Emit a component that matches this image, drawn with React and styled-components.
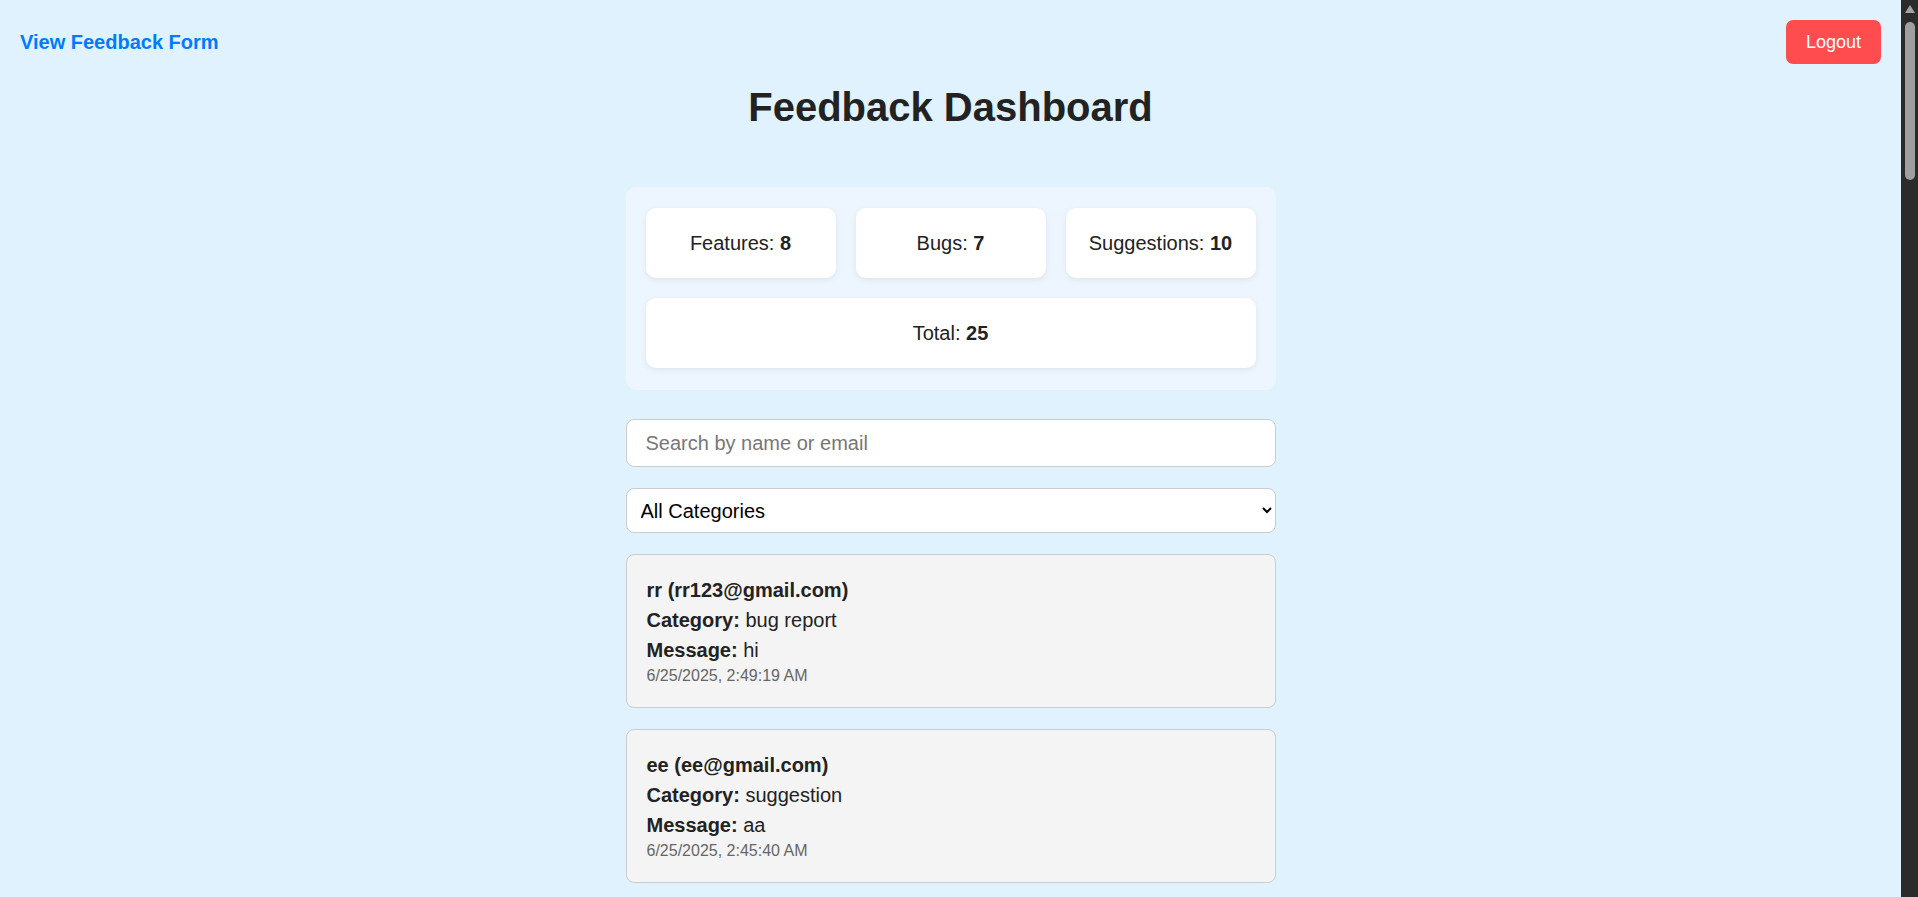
import { useState } from "react"
import styled, { createGlobalStyle } from "styled-components"

const GlobalStyle = createGlobalStyle`
  html, body {
    margin: 0;
    padding: 0;
  }
  body {
    background-color: #e0f2fe;
    font-family: "Liberation Sans", Arial, sans-serif;
    color: #222;
  }
`

// the window's own scrollbar, drawn since the shot has none
const ScrollTrack = styled.div`
  position: fixed;
  top: 0;
  right: 0;
  bottom: 0;
  width: 17px;
  background: #2b2b2b;
  z-index: 10;
`

const ScrollArrow = styled.div`
  position: absolute;
  top: 5px;
  left: 4px;
  width: 0;
  height: 0;
  border-left: 5px solid transparent;
  border-right: 5px solid transparent;
  border-bottom: 8px solid #a3a3a3;
`

const ScrollThumb = styled.div`
  position: absolute;
  top: 22px;
  left: 4px;
  width: 10px;
  height: 158px;
  border-radius: 5px;
  background: #9f9f9f;
`

const Shell = styled.div`
  margin-right: 17px;
`

const Header = styled.header`
  display: flex;
  justify-content: space-between;
  align-items: center;
  padding: 20px;
`

const FormLink = styled.a`
  color: #007bff;
  font-size: 20px;
  font-weight: bold;
  text-decoration: none;
  cursor: pointer;
`

const LogoutButton = styled.button`
  background-color: #ff4d4f;
  color: #fff;
  border: none;
  border-radius: 7px;
  height: 44px;
  width: 95px;
  padding: 0;
  font-family: inherit;
  font-size: 18px;
  cursor: pointer;
`

const Title = styled.h1`
  text-align: center;
  font-size: 40px;
  line-height: 46px;
  margin: 0 0 57px;
  color: #222;
`

const Main = styled.main`
  max-width: 650px;
  margin: 0 auto;
  padding-bottom: 40px;
`

const StatsPanel = styled.section`
  background-color: #edf6ff;
  border-radius: 10px;
  padding: 21px 20px 22px;
  margin-bottom: 29px;
  display: grid;
  grid-template-columns: repeat(3, 1fr);
  gap: 20px;
`

const StatCard = styled.div`
  background: #fff;
  border-radius: 10px;
  box-shadow: 0 2px 6px rgba(0, 0, 0, 0.07);
  height: 70px;
  display: flex;
  align-items: center;
  justify-content: center;
  font-size: 20px;
  grid-column: ${({ $wide }) => ($wide ? "1 / -1" : "auto")};
  & b {
    font-weight: bold;
  }
`

const SearchInput = styled.input`
  display: block;
  width: 100%;
  box-sizing: border-box;
  height: 48px;
  padding: 0 19px;
  font-family: inherit;
  font-size: 20px;
  border: 1px solid #ccc;
  border-radius: 8px;
  background: #fff;
  margin-bottom: 21px;
  outline: none;
  &::placeholder {
    color: #777;
  }
`

const CategorySelect = styled.select`
  display: block;
  width: 100%;
  box-sizing: border-box;
  height: 45px;
  padding: 0 10px;
  font-family: inherit;
  font-size: 20px;
  color: #000;
  border: 1px solid #ccc;
  border-radius: 8px;
  background: #fff;
  margin-bottom: 21px;
`

const FeedbackList = styled.div`
  display: flex;
  flex-direction: column;
  gap: 21px;
`

const FeedbackCard = styled.div`
  background: #f4f4f4;
  border: 1px solid #ccc;
  border-radius: 8px;
  padding: 20px;
`

const CardLine = styled.p`
  margin: 0;
  font-size: 20px;
  line-height: 30px;
  color: #222;
  font-weight: ${({ $bold }) => ($bold ? "bold" : "normal")};
`

const DateLine = styled.p`
  margin: 0;
  font-size: 16px;
  line-height: 22px;
  color: #666;
`

const feedbacks = [
  { name: "rr", email: "rr123@gmail.com", category: "bug report", message: "hi", date: "6/25/2025, 2:49:19 AM" },
  { name: "ee", email: "ee@gmail.com", category: "suggestion", message: "aa", date: "6/25/2025, 2:45:40 AM" },
  { name: "ww", email: "ww@gmail.com", category: "feature request", message: "add dark mode", date: "6/25/2025, 2:40:12 AM" },
  { name: "qq", email: "qq@gmail.com", category: "suggestion", message: "nice", date: "6/25/2025, 2:31:05 AM" },
  { name: "tt", email: "tt@gmail.com", category: "bug report", message: "page crashes", date: "6/25/2025, 2:22:48 AM" },
  { name: "yy", email: "yy@gmail.com", category: "feature request", message: "export csv", date: "6/25/2025, 2:10:33 AM" },
  { name: "uu", email: "uu@gmail.com", category: "suggestion", message: "ok", date: "6/25/2025, 1:58:21 AM" },
  { name: "ii", email: "ii@gmail.com", category: "bug report", message: "login fails", date: "6/25/2025, 1:47:09 AM" },
  { name: "oo", email: "oo@gmail.com", category: "suggestion", message: "good", date: "6/25/2025, 1:36:54 AM" },
  { name: "pp", email: "pp@gmail.com", category: "feature request", message: "notifications", date: "6/25/2025, 1:25:40 AM" },
  { name: "aa", email: "aa@gmail.com", category: "suggestion", message: "test", date: "6/25/2025, 1:14:27 AM" },
  { name: "ss", email: "ss@gmail.com", category: "bug report", message: "slow load", date: "6/25/2025, 1:03:15 AM" },
  { name: "dd", email: "dd@gmail.com", category: "feature request", message: "search filter", date: "6/25/2025, 12:52:02 AM" },
  { name: "ff", email: "ff@gmail.com", category: "suggestion", message: "hello", date: "6/25/2025, 12:40:48 AM" },
  { name: "gg", email: "gg@gmail.com", category: "bug report", message: "button broken", date: "6/25/2025, 12:29:36 AM" },
  { name: "hh", email: "hh@gmail.com", category: "feature request", message: "profile page", date: "6/25/2025, 12:18:24 AM" },
  { name: "jj", email: "jj@gmail.com", category: "suggestion", message: "thanks", date: "6/25/2025, 12:07:11 AM" },
  { name: "kk", email: "kk@gmail.com", category: "bug report", message: "typo", date: "6/24/2025, 11:55:58 PM" },
  { name: "ll", email: "ll@gmail.com", category: "suggestion", message: "more colors", date: "6/24/2025, 11:44:46 PM" },
  { name: "zz", email: "zz@gmail.com", category: "feature request", message: "mobile app", date: "6/24/2025, 11:33:33 PM" },
  { name: "xx", email: "xx@gmail.com", category: "suggestion", message: "cool", date: "6/24/2025, 11:22:20 PM" },
  { name: "cc", email: "cc@gmail.com", category: "bug report", message: "error 500", date: "6/24/2025, 11:11:07 PM" },
  { name: "vv", email: "vv@gmail.com", category: "suggestion", message: "great", date: "6/24/2025, 10:59:55 PM" },
  { name: "bb", email: "bb@gmail.com", category: "feature request", message: "pagination", date: "6/24/2025, 10:48:42 PM" },
  { name: "nn", email: "nn@gmail.com", category: "suggestion", message: "fine", date: "6/24/2025, 10:37:29 PM" },
]

export default function App() {
  const [search, setSearch] = useState("")
  const [category, setCategory] = useState("all")

  const filtered = feedbacks.filter((f) => {
    const q = search.toLowerCase()
    const matches = f.name.toLowerCase().includes(q) || f.email.toLowerCase().includes(q)
    return matches && (category === "all" || f.category === category)
  })

  return (
    <>
      <GlobalStyle />
      <ScrollTrack aria-hidden="true">
        <ScrollArrow />
        <ScrollThumb />
      </ScrollTrack>
      <Shell>
        <Header>
          <FormLink>View Feedback Form</FormLink>
          <LogoutButton>Logout</LogoutButton>
        </Header>
        <Title>Feedback Dashboard</Title>
        <Main>
          <StatsPanel>
            <StatCard>
              Features:&nbsp;<b>8</b>
            </StatCard>
            <StatCard>
              Bugs:&nbsp;<b>7</b>
            </StatCard>
            <StatCard>
              Suggestions:&nbsp;<b>10</b>
            </StatCard>
            <StatCard $wide>
              Total:&nbsp;<b>25</b>
            </StatCard>
          </StatsPanel>
          <SearchInput
            placeholder="Search by name or email"
            value={search}
            onChange={(e) => setSearch(e.target.value)}
          />
          <CategorySelect value={category} onChange={(e) => setCategory(e.target.value)}>
            <option value="all">All Categories</option>
            <option value="feature request">Feature Request</option>
            <option value="bug report">Bug Report</option>
            <option value="suggestion">Suggestion</option>
          </CategorySelect>
          <FeedbackList>
            {filtered.map((f) => (
              <FeedbackCard key={f.email}>
                <CardLine $bold>
                  {f.name} ({f.email})
                </CardLine>
                <CardLine>
                  <b>Category:</b> {f.category}
                </CardLine>
                <CardLine>
                  <b>Message:</b> {f.message}
                </CardLine>
                <DateLine>{f.date}</DateLine>
              </FeedbackCard>
            ))}
          </FeedbackList>
        </Main>
      </Shell>
    </>
  )
}
